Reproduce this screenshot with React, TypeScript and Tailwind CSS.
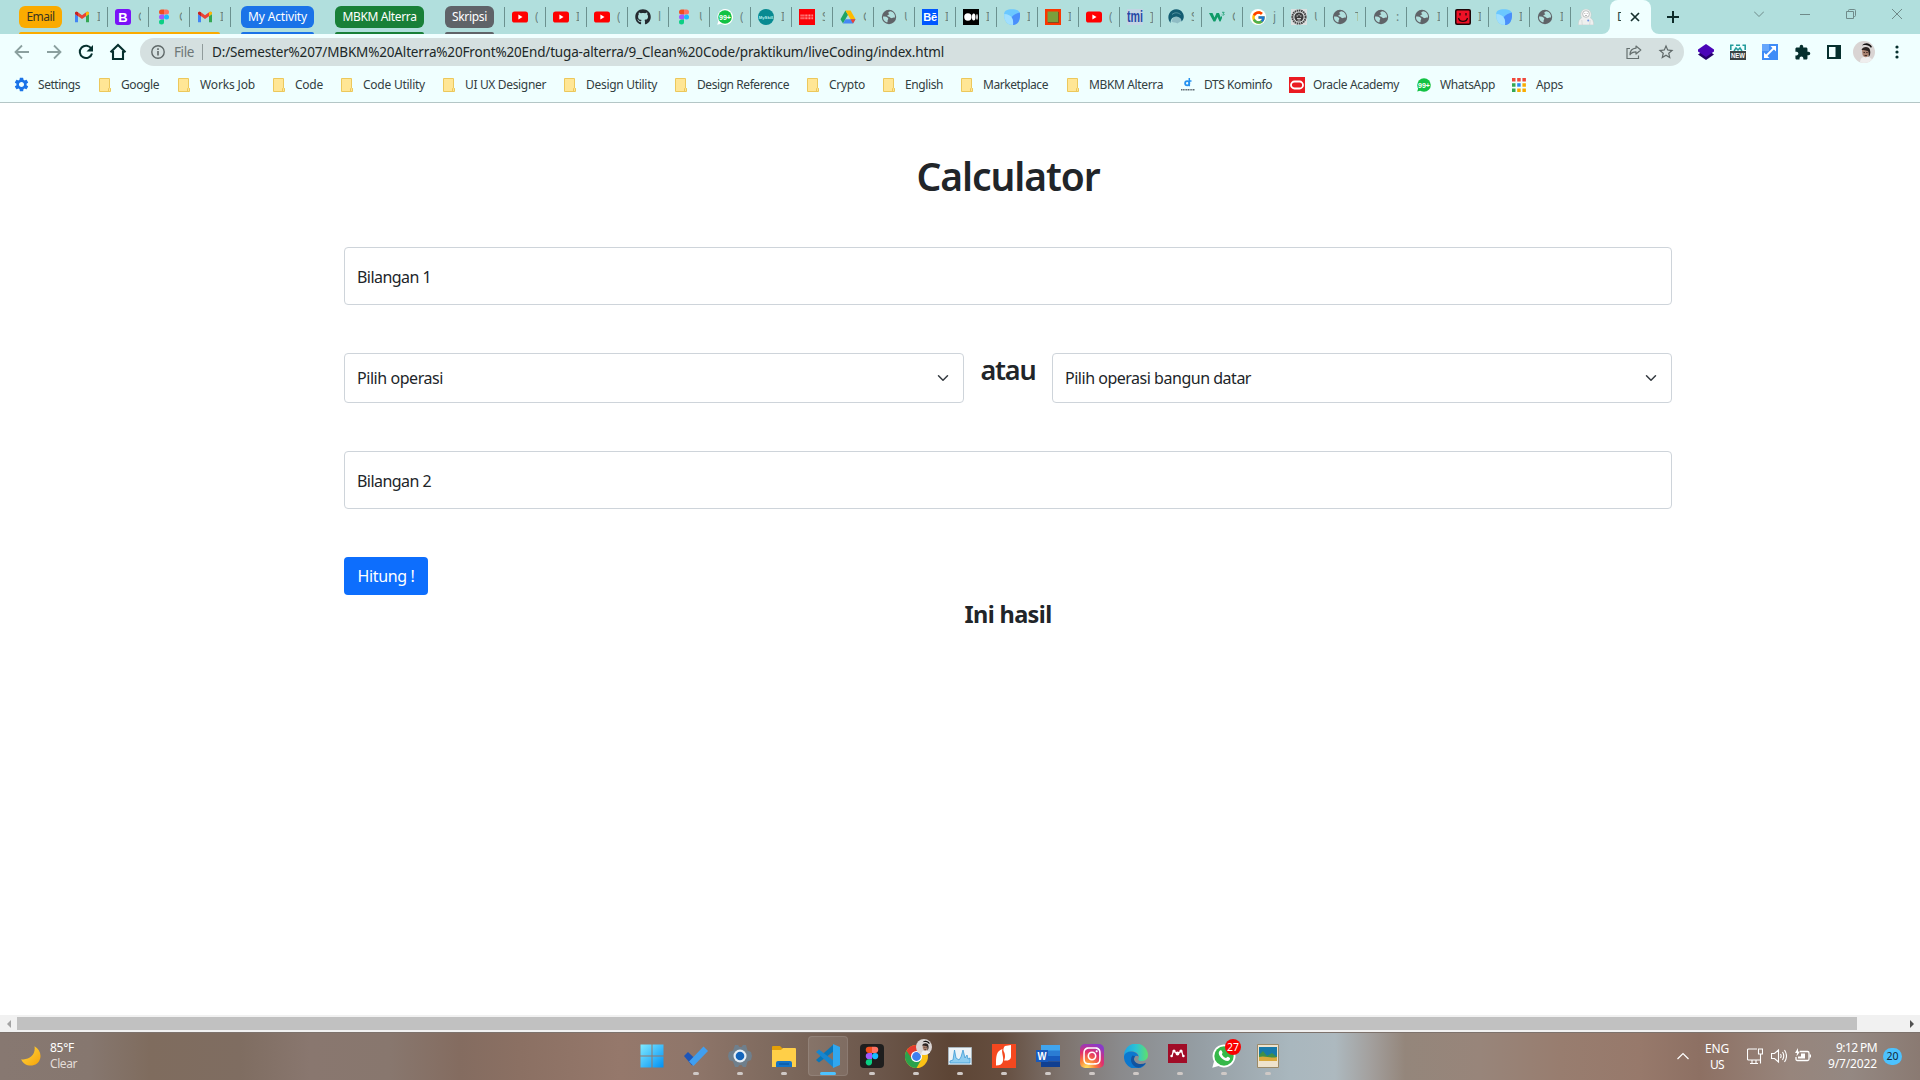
import React, { useLayoutEffect, useRef, useState } from "react";
import { FaGithub, FaInstagram } from "react-icons/fa";
import { FcGoogle } from "react-icons/fc";
import { MdExtension, MdSettings, MdStarOutline } from "react-icons/md";

/* Text whose letter spacing is tuned so the line fills a given width. */
function Fit({ w, children, className = "" }: { w: number; children: string; className?: string }) {
  const ref = useRef<HTMLSpanElement>(null);
  const [spacing, setSpacing] = useState(0);
  useLayoutEffect(() => {
    if (ref.current) {
      const natural = ref.current.getBoundingClientRect().width - spacing * children.length;
      setSpacing((w - natural) / children.length);
    }
  }, [w, children]);
  return (
    <span ref={ref} className={`inline-block whitespace-pre ${className}`} style={{ letterSpacing: spacing }}>
      {children}
    </span>
  );
}

type IconProps = { s?: number };

const Gmail = ({ s = 16 }: IconProps) => (
  <svg width={s} height={s} viewBox="0 0 16 16">
    <path d="M1 4v9.2h3V7.2L1 5z" fill="#4285f4" />
    <path d="M15 4v9.2h-3V7.2L15 5z" fill="#34a853" />
    <path d="M1 4.2C1 2.8 2.6 2.2 3.6 3L8 6.3v3.8L1 5.1z" fill="#ea4335" />
    <path d="M15 4.2c0-1.4-1.6-2-2.6-1.2L8 6.3v3.8L12 7.2z" fill="#ea4335" />
    <path d="M15 4.2c0-1.4-1.6-2-3-.9v4L15 5.1z" fill="#fbbc04" />
    <path d="M1 4.2C1 2.8 2.6 2.2 4 3.3v4L1 5.1z" fill="#c5221f" />
  </svg>
);

const Bootstrap = () => (
  <span className="flex size-4 items-center justify-center rounded-[3px] bg-[#7a12f8] font-['Liberation_Sans'] text-[13px] font-bold leading-none text-white">B</span>
);

const Figma = ({ s = 16 }: IconProps) => (
  <svg width={s} height={s} viewBox="0 0 16 16">
    <path d="M5.5 0.5H8v5H5.5a2.5 2.5 0 0 1 0-5z" fill="#f24e1e" />
    <path d="M8 .5h2.5a2.5 2.5 0 0 1 0 5H8z" fill="#ff7262" />
    <path d="M5.5 5.5H8v5H5.5a2.5 2.5 0 0 1 0-5z" fill="#a259ff" />
    <circle cx="10.5" cy="8" r="2.5" fill="#1abcfe" />
    <path d="M5.5 10.5H8V13a2.5 2.5 0 1 1-2.5-2.5z" fill="#0acf83" />
  </svg>
);

const YouTube = () => (
  <svg width="16" height="16" viewBox="0 0 16 16">
    <rect x="0" y="2.5" width="16" height="11" rx="2.6" fill="#f00" />
    <path d="M6.4 5.6v4.8L10.5 8z" fill="#fff" />
  </svg>
);

const GitHub = () => <FaGithub size={16} color="#24292f" />;

const Bubble99 = ({ ring = true }: { ring?: boolean }) => (
  <svg width="16" height="16" viewBox="0 0 16 16">
    <path d={ring ? "M8 .1a7.9 7.9 0 1 1-3.900 14.700L.2 15.800l1.200-3.900A7.900 7.900 0 0 1 8 .1z" : "M3 9l-1.800 5.500L7 13z"} fill={ring ? "#fff" : "#12c243"} />
    <circle cx="8" cy="8" r="6.8" fill="#12c243" />
    <text x="8" y="10.9" textAnchor="middle" textLength="12" lengthAdjust="spacingAndGlyphs" fontSize="8" fontWeight="700" fontFamily="Liberation Sans, sans-serif" fill="#fff">99+</text>
  </svg>
);

const MySkill = () => (
  <svg width="16" height="16" viewBox="0 0 16 16">
    <circle cx="8" cy="8" r="8" fill="#078a91" />
    <text x="8" y="9.6" textAnchor="middle" fontSize="4.2" fontWeight="700" fontFamily="Liberation Sans, sans-serif" fill="#bff1ee">MySkill</text>
  </svg>
);

const RedBox = () => (
  <svg width="16" height="16" viewBox="0 0 16 16">
    <path fill="#fb0006" d="M0 0h16v16H0z" />
    <path d="M1.500 6.500h13M1.500 9.300h13" stroke="#ff8f8f" strokeWidth="2" strokeDasharray="1.2 .5 .7 .4" />
  </svg>
);

const Drive = () => (
  <svg width="16" height="16" viewBox="0 0 16 16">
    <path d="M5.4 1.5L.5 10.2 3 14.5l5-8.7z" fill="#1fa463" />
    <path d="M5.4 1.5h5.2l4.9 8.7h-5z" fill="#ffba00" />
    <path d="M3 14.5l2.5-4.3h10L13 14.5z" fill="#4688f4" />
    <path d="M10.5 10.2h5L13 14.5z" fill="#ea4335" />
  </svg>
);

const Globe = () => (
  <svg width="16" height="16" viewBox="0 0 16 16">
    <circle cx="8" cy="8" r="7.2" fill="#5f6368" />
    <path d="M9.500 2.300C7 3 6.800 4.200 8 4.800c.8.500-.2 1.200-1.200 1.200-.8.300-.3 1.400.4 1.600 1.800 0 1.500 1.300 3 1.500 1 .2 1.500-.5 3.800-.5A6 6 0 0 0 9.500 2.300zM2 7.400c2.500 0 4.500.4 5.200 1.800.5 1.200-1 1.500-.6 3.200.1.900-.6 1-1.200.8A6 6 0 0 1 2 7.400z" fill="#b1dfdd" />
  </svg>
);

const Behance = () => (
  <span className="flex size-4 items-center justify-center bg-[#0057ff] font-['Liberation_Sans'] text-[11px] font-bold leading-none tracking-[-0.3px] text-white">Bē</span>
);

const Medium = () => (
  <svg width="16" height="16" viewBox="0 0 16 16">
    <path d="M0 0h16v16H0z" fill="#000" />
    <circle cx="4.9" cy="8" r="3.7" fill="#fff" />
    <ellipse cx="10.7" cy="8" rx="1.8" ry="3.5" fill="#fff" />
    <ellipse cx="14" cy="8" rx=".8" ry="3.1" fill="#fff" />
  </svg>
);

const BlueBlob = () => (
  <svg width="16" height="16" viewBox="0 0 16 16">
    <path d="M2 1.500C5-.3 11-.3 14 1.500c2 1.500 2.400 4 1.800 7.500C15 13.500 12.500 16 9 16 4 16 1 13 .3 8-.2 5 0 3 2 1.500z" fill="#6bc8ff" />
    <path d="M15.800 3.500C13 4 9 6 7.500 8.500c1.500 2 1.800 4.500 1.500 7.500 3.500 0 6-2.500 6.800-7 .3-2 .3-4 0-5.500z" fill="#4a8ffb" />
    <path d="M.2 5C4 5 7 6.500 8.300 9.500c.9 2 1 4.500.7 6.500C4 16 1 13 .3 8z" fill="#a0dfff" />
  </svg>
);

const GreenBox = () => (
  <svg width="16" height="16" viewBox="0 0 16 16">
    <path d="M0 0h16v16H0z" fill="#fb3600" />
    <path d="M3 3h11v11H3z" fill="#8a4a1c" />
    <path d="M2.500 2.500h10.500v10.500H2.500z" fill="#7a9f3c" />
  </svg>
);

const Tmi = () => (
  <svg width="16" height="16" viewBox="0 0 16 16">
    <path d="M0 0h16v16H0z" fill="#c3d5e4" />
    <text x="0" y="13" textLength="16" lengthAdjust="spacingAndGlyphs" fontSize="16" fontWeight="700" fontFamily="Liberation Sans, sans-serif" fill="#2548a5">tmi</text>
  </svg>
);

const Sailor = () => (
  <svg width="16" height="16" viewBox="0 0 16 16">
    <path d="M2.500 14C-1 10 0 4 4 1.500 8-.8 13 .5 15 4.500c1.500 3 .8 6-1.500 8-1-3-3-4.500-6-4.500-3.500.3-5 2.500-5 6z" fill="#135c72" />
    <path d="M3.500 12.500C4.500 9 6 7.500 8.500 7.500c2.500.3 4.500 1.500 5 4-1 2-3 1.500-4 3-2-1.500-4-.5-6-2z" fill="#8fbcc4" />
    <path d="M4 5.500c3-2.500 6-2 8.500 0" stroke="#5795a3" fill="none" />
  </svg>
);

const W3 = () => (
  <svg width="16" height="16" viewBox="0 0 16 16">
    <path d="M0 4h3.500l2 4.500L7.500 4H10l1.800 4.500L13 6.500V9l-1.500 3.500h-1L8.500 8l-2.200 4.500H4.500z" fill="#0f9b68" />
    <path d="M13 3.300h2.200l-1 1.200c1.300.2 1.200 1.800-.2 1.700-.5 0-.8-.2-1-.5" fill="none" stroke="#0f9b68" strokeWidth=".8" />
  </svg>
);

const GoogleDisc = () => (
  <span className="flex size-4 items-center justify-center rounded-full bg-white">
    <FcGoogle size={15} />
  </span>
);

const Crest = () => (
  <svg width="16" height="16" viewBox="0 0 16 16">
    <path d="M0 0h16v16H0z" fill="#dce0e0" />
    <circle cx="8" cy="8" r="6.600" fill="none" stroke="#444" strokeWidth="2" strokeDasharray="1.600 .6" />
    <circle cx="8" cy="8" r="4.600" fill="#3c3c3c" />
    <path d="M5.500 7h1.500M9 7h1.500M6 9.500h4M8 5v1.500M6.500 11h3" stroke="#ccc" strokeWidth="1" />
  </svg>
);

const Smiley = () => (
  <svg width="16" height="16" viewBox="0 0 16 16">
    <rect width="16" height="16" rx="2" fill="#200508" />
    <rect x="1.500" y="1.500" width="13" height="13" rx="1" fill="#ee1126" />
    <path d="M5 4v2.500M11 4v2.500M3.500 9c1 4.500 8 4.500 9 0" stroke="#200508" strokeWidth="1.200" fill="none" />
  </svg>
);

const Astronaut = () => (
  <svg width="16" height="16" viewBox="0 0 16 16">
    <path d="M3.500 9C1.500 4 4 0 8 0s6.500 4 4.500 9c2.300.8 3.200 3.500 3.300 7H.2C.3 12.500 1.200 9.800 3.500 9z" fill="#eef0ef" stroke="#bcc6c5" strokeWidth=".5" />
    <rect x="4.700" y="1.800" width="6.600" height="6.400" rx="3" fill="#fff" stroke="#a9aead" strokeWidth=".8" />
    <path d="M6.300 4.500h1M8.700 4.500h1M7 6.500h2" stroke="#999" strokeWidth=".7" />
    <path d="M3.800 11l.5 5M12.200 11l-.5 5" stroke="#c9cfce" strokeWidth=".6" />
    <circle cx="10.200" cy="11.500" r="1" fill="#6c92e8" />
  </svg>
);

type TabDef = { icon: React.ReactNode; t: string };
const emailTabs: TabDef[] = [
  { icon: <Gmail />, t: "I" },
  { icon: <Bootstrap />, t: "C" },
  { icon: <Figma />, t: "C" },
  { icon: <Gmail />, t: "I" },
];
const tabs: TabDef[] = [
  { icon: <YouTube />, t: "(" },
  { icon: <YouTube />, t: "I" },
  { icon: <YouTube />, t: "(" },
  { icon: <GitHub />, t: "l" },
  { icon: <Figma />, t: "U" },
  { icon: <Bubble99 />, t: "(" },
  { icon: <MySkill />, t: "I" },
  { icon: <RedBox />, t: "S" },
  { icon: <Drive />, t: "C" },
  { icon: <Globe />, t: "U" },
  { icon: <Behance />, t: "I" },
  { icon: <Medium />, t: "I" },
  { icon: <BlueBlob />, t: "I" },
  { icon: <GreenBox />, t: "I" },
  { icon: <YouTube />, t: "(" },
  { icon: <Tmi />, t: "]" },
  { icon: <Sailor />, t: "S" },
  { icon: <W3 />, t: "C" },
  { icon: <GoogleDisc />, t: "j" },
  { icon: <Crest />, t: "U" },
  { icon: <Globe />, t: "T" },
  { icon: <Globe />, t: ":" },
  { icon: <Globe />, t: "I" },
  { icon: <Smiley />, t: "I" },
  { icon: <BlueBlob />, t: "I" },
  { icon: <Globe />, t: "I" },
];

const Tab = ({ icon, t }: TabDef) => (
  <div className="flex h-[34px] w-[41px] shrink-0 items-center pl-[7px]">
    <span className="flex size-4 shrink-0 items-center justify-center">{icon}</span>
    <span className="ml-[7px] w-[3px] overflow-hidden text-[12px] leading-4 text-[#3c4a48] opacity-60">{t}</span>
    <span className="ml-auto h-5 w-px bg-[#6b918f]" />
  </div>
);

const Pill = ({ label, w, tw, cls }: { label: string; w: string; tw: number; cls: string }) => (
  <div className={`flex h-[34px] shrink-0 flex-col justify-between pt-1.5 ${w}`}>
    <div className={`flex h-[22px] items-center justify-center rounded-[6px] text-[12px] leading-4 ${cls}`}>
      <Fit w={tw}>{label}</Fit>
    </div>
    <div className={`h-0.5 rounded-t-sm ${cls}`} />
  </div>
);

function TabStrip() {
  return (
    <div className="flex h-[34px] shrink-0 bg-[#b1dfdd] pl-[19px]">
      <div className="flex h-[34px] w-[212px] flex-col">
        <div className="flex h-8 shrink-0">
          <div className="mr-[5px] mt-1.5 flex h-[22px] w-[43px] shrink-0 items-center justify-center rounded-[6px] bg-[#faab00] text-[12px] leading-4 text-[#3a3520]">
            <Fit w={28}>Email</Fit>
          </div>
          {emailTabs.map((x, i) => <Tab key={i} {...x} />)}
        </div>
        <div className="h-0.5 w-[201px] rounded-t-sm bg-[#faab00]" />
      </div>
      <div className="ml-2.5 mr-2.5 flex gap-[21px]">
        <Pill label="My Activity" w="w-[73px]" tw={59} cls="bg-[#1a73e8] text-white" />
        <Pill label="MBKM Alterra" w="w-[89px]" tw={74} cls="bg-[#188038] text-white" />
        <Pill label="Skripsi" w="w-[49px]" tw={35} cls="bg-[#5f6368] text-white" />
      </div>
      <span className="mt-[7px] h-5 w-px bg-[#6b918f]" />
      {tabs.map((x, i) => <Tab key={i} {...x} />)}
      <div className="flex w-[31px] shrink-0 items-center pl-[7px]"><span className="block size-4 shrink-0"><Astronaut /></span></div>
      <svg width="8" height="34" viewBox="0 0 8 34" className="shrink-0"><path d="M0 34a8 8 0 0 0 8-8v8z" fill="#f0ffff" /></svg>
      <div className="flex h-[34px] w-[41px] shrink-0 items-center rounded-t-[8px] bg-[#f0ffff]">
        <span className="ml-[7px] w-1 overflow-hidden text-[12px] text-[#274543]">D</span>
        <svg className="ml-[9px]" width="10" height="10" viewBox="0 0 10 10"><path d="M1 1l8 8M9 1L1 9" stroke="#17302e" strokeWidth="1.700" /></svg>
      </div>
      <svg width="8" height="34" viewBox="0 0 8 34" className="shrink-0"><path d="M8 34a8 8 0 0 1-8-8v8z" fill="#f0ffff" /></svg>
      <div className="flex flex-1 items-center justify-between pl-2 pr-[18px]">
        <svg width="12" height="12" viewBox="0 0 12 12"><path d="M6 0v12M0 6h12" stroke="#0d2b29" strokeWidth="2" /></svg>
        <div className="mb-1.5 flex items-center gap-9 text-[#6f8a89]">
          <svg width="10" height="10" viewBox="0 0 10 10"><path d="M0 2.500l5 5 5-5" fill="none" stroke="currentColor" /></svg>
          <svg width="10" height="10" viewBox="0 0 10 10"><path d="M0 5.500h10" stroke="currentColor" /></svg>
          <svg width="10" height="10" viewBox="0 0 10 10"><path d="M.5 2.500h7v7h-7zM2.500 2.500V1.500q0-1 1-1h5q1 0 1 1v5q0 1-1 1h-1" fill="none" stroke="currentColor" /></svg>
          <svg width="10" height="10" viewBox="0 0 10 10"><path d="M0 0l10 10M10 0L0 10" stroke="currentColor" /></svg>
        </div>
      </div>
    </div>
  );
}

function Toolbar() {
  return (
    <div className="flex h-9 shrink-0 items-center bg-[#f0ffff] pl-[14px]">
      <div className="flex w-[126px] items-center gap-4">
        <svg width="16" height="16" viewBox="0 0 16 16"><path d="M15 8H2M8 1.500L1.500 8 8 14.500" fill="none" stroke="#8ba09f" strokeWidth="1.800" /></svg>
        <svg width="16" height="16" viewBox="0 0 16 16"><path d="M1 8h13M8 1.500L14.500 8 8 14.500" fill="none" stroke="#8ba09f" strokeWidth="1.800" /></svg>
        <svg width="16" height="16" viewBox="0 0 16 16"><path d="M13.400 4.800A6.200 6.200 0 1 0 14 9.500" fill="none" stroke="#06302e" strokeWidth="2" /><path d="M15 1v6.500H8.500z" fill="#06302e" /></svg>
        <svg width="18" height="18" viewBox="0 0 18 18" className="-ml-px"><path d="M1.500 9.200L9 2l7.500 7.200M4 8v8h10V8" fill="none" stroke="#06302e" strokeWidth="2.100" /></svg>
      </div>
      <div className="flex h-7 w-[1544px] items-center rounded-full bg-[#d5e0e0] pl-[11px] pr-[9px] text-[14px]">
        <svg width="14" height="14" viewBox="0 0 14 14"><circle cx="7" cy="7" r="6.200" fill="none" stroke="#5f6868" strokeWidth="1.400" /><path d="M7 6v4.500M7 3.300V5" stroke="#5f6868" strokeWidth="1.600" /></svg>
        <Fit w={20} className="ml-[9px] text-[13.500px] text-[#6d7777]">File</Fit>
        <span className="ml-2 h-4 w-px bg-[#909b9b]" />
        <Fit w={732} className="ml-[9px] text-[13.500px] text-[#202828]">D:/Semester%207/MBKM%20Alterra%20Front%20End/tuga-alterra/9_Clean%20Code/praktikum/liveCoding/index.html</Fit>
        <svg className="ml-auto" width="16" height="16" viewBox="0 0 16 16"><path d="M4 4.500H1v10h11.500v-3" fill="none" stroke="#66706f" strokeWidth="1.200" /><path d="M10 2l4.800 4L10 10V7.800C7 7.800 5 9 4 10.800 4 7 6.500 4.500 10 4.200z" fill="none" stroke="#66706f" strokeWidth="1.200" strokeLinejoin="round" /></svg>
        <MdStarOutline size={18} color="#5f6868" className="ml-[15px]" />
      </div>
      <div className="ml-3.5 flex items-center">
        <svg width="16" height="16" viewBox="0 0 16 16"><path d="M0 10.500L8 5l8 5.500L8 16z" fill="#25006c" /><path d="M0 5.500L8 0l8 5.500v2L8 13 0 7.500z" fill="#4a05b8" /></svg>
        <svg className="ml-4" width="16" height="16" viewBox="0 0 16 16"><path d="M.8 6V1.300h2.700M6 1.300h4M12.500 1.300h2.700V6" fill="none" stroke="#239c9c" strokeWidth="1.600" /><path d="M4 7l2-3L8 6l2-2 2 3" fill="none" stroke="#239c9c" strokeWidth="1.500" /><path d="M0 7h16v9H0z" fill="#3b4343" /><text x="1" y="14.200" textLength="14" lengthAdjust="spacingAndGlyphs" fontSize="8" fontWeight="700" fontFamily="Liberation Sans, sans-serif" fill="#fff">NEW</text></svg>
        <svg className="ml-4" width="16" height="16" viewBox="0 0 16 16"><path d="M0 0h16v16H0z" fill="#3f8cf7" /><path d="M0 0h7v7H0z" fill="#66a6fb" /><path d="M4 12l8-8" stroke="#fff" strokeWidth="1.800" /><path d="M8.500 2H14v5.500zM2 8.500V14h5.500z" fill="#fff" /></svg>
        <MdExtension size={17} color="#06302e" className="ml-4" />
        <svg className="ml-4" width="14" height="14" viewBox="0 0 14 14"><path d="M1 1h12v12H1z" fill="#f0ffff" stroke="#06302e" strokeWidth="2" /><path d="M8.500 1H13v12H8.500z" fill="#06302e" /></svg>
        <Avatar s={22} className="ml-3" />
        <svg className="ml-5" width="4" height="14" viewBox="0 0 4 14" fill="#06302e"><circle cx="2" cy="2" r="1.600" /><circle cx="2" cy="7" r="1.600" /><circle cx="2" cy="12" r="1.600" /></svg>
      </div>
    </div>
  );
}

const Avatar = ({ s, className = "" }: { s: number; className?: string }) => (
  <svg width={s} height={s} viewBox="0 0 22 22" className={className}>
    <defs><clipPath id="face"><circle cx="11" cy="11" r="11" /></clipPath></defs>
    <g clipPath="url(#face)">
      <path d="M0 0h22v22H0z" fill="#d9d4d3" />
      <path d="M7 22c0-4 2-6 4-6h5l6 4v2z" fill="#efeeee" />
      <path d="M9 9c1-2 7-2 7 0v4.500c-1 3.500-5.500 3.500-6.500 0z" fill="#a98270" />
      <path d="M8.500 9c1-4 8-4 8.500 0 .8 3 0 6-1.500 7 .6-3 .4-4.500-.5-6-2-.5-4-1-6.500-1z" fill="#2c2422" />
      <path d="M9 4.500c3-3.500 8-2.500 10 1.500l-1.200.8C16 4 13 3.500 9 4.500z" fill="#141212" />
      <path d="M10.500 11.500h1.500M13.200 11.500h1.500M11.500 14.500h2.500" stroke="#3a2520" strokeWidth=".9" />
    </g>
  </svg>
);

const Folder = () => (
  <svg width="12" height="14" viewBox="0 0 12 14"><path d="M.5.5h10v9.500l1 .5v3H.5z" fill="#ffe695" stroke="#ecc85c" /><path d="M9.500 13V10.500q1-1.500 2 0V13" fill="#ffe695" stroke="#ecc85c" /></svg>
);
const AppsGrid = () => (
  <svg width="14" height="14" viewBox="0 0 14 14">
    <path d="M0 0h3.500v3.500H0zM5.200 0h3.500v3.500H5.200zM10.400 0h3.500v3.500h-3.500z" fill="#f0483b" />
    <path d="M0 5.200h3.500v3.500H0zM0 10.400h3.500v3.500H0z" fill="#34a853" />
    <path d="M5.200 5.200h3.500v3.500H5.200z" fill="#2a8af0" />
    <path d="M10.400 5.200h3.500v3.500h-3.500zM5.200 10.400h3.500v3.500H5.200zM10.400 10.400h3.500v3.500h-3.500z" fill="#f9ab00" />
  </svg>
);
const Dts = () => (
  <svg width="16" height="16" viewBox="0 0 16 16"><circle cx="7.200" cy="6.200" r="2.100" fill="none" stroke="#2591f0" strokeWidth="1.800" /><path d="M9.300 1v8.200M8.500 4h3" stroke="#2591f0" strokeWidth="1.500" /><path d="M1 12.700h14" stroke="#5c6870" strokeWidth="1.500" strokeDasharray="1.200 .5" /></svg>
);
const Oracle = () => (
  <svg width="16" height="16" viewBox="0 0 16 16"><path d="M0 0h16v16H0z" fill="#ea1b22" /><rect x="2" y="4.500" width="12" height="7" rx="3.500" fill="none" stroke="#fff" strokeWidth="1.800" /></svg>
);

type Bm = { label: string; tw: number; cell: string; icon?: React.ReactNode };
const bookmarks: Bm[] = [
  { label: "Settings", tw: 42, cell: "w-[83px]", icon: <MdSettings size={17} color="#1a73e8" className="-ml-0.5" /> },
  { label: "Google", tw: 38, cell: "w-[79px]" },
  { label: "Works Job", tw: 55, cell: "w-[95px]" },
  { label: "Code", tw: 28, cell: "w-[68px]" },
  { label: "Code Utility", tw: 62, cell: "w-[102px]" },
  { label: "UI UX Designer", tw: 81, cell: "w-[121px]" },
  { label: "Design Utility", tw: 71, cell: "w-[111px]" },
  { label: "Design Reference", tw: 92, cell: "w-[132px]" },
  { label: "Crypto", tw: 36, cell: "w-[76px]" },
  { label: "English", tw: 38, cell: "w-[78px]" },
  { label: "Marketplace", tw: 65, cell: "w-[106px]" },
  { label: "MBKM Alterra", tw: 74, cell: "w-[115px]" },
  { label: "DTS Kominfo", tw: 68, cell: "w-[109px]", icon: <span className="-ml-px"><Dts /></span> },
  { label: "Oracle Academy", tw: 86, cell: "w-[127px]", icon: <span className="-ml-px"><Oracle /></span> },
  { label: "WhatsApp", tw: 55, cell: "w-[96px]", icon: <span className="-ml-px"><Bubble99 ring={false} /></span> },
  { label: "Apps", tw: 27, cell: "w-[60px]", icon: <span className="-ml-px"><AppsGrid /></span> },
];

function Bookmarks() {
  return (
    <div className="flex h-[33px] shrink-0 items-center border-b border-[#b4c6c6] bg-[#f0ffff] pb-[3px] pl-[15px] text-[12px] leading-4 text-[#33403f]">
      {bookmarks.map((b) => (
        <div key={b.label} className={`flex shrink-0 items-center ${b.cell}`}>
          <span className="flex w-[23px] shrink-0 items-center">{b.icon ?? <span className="ml-px"><Folder /></span>}</span>
          <Fit w={b.tw}>{b.label}</Fit>
        </div>
      ))}
    </div>
  );
}

const Chevron = () => (
  <svg width="16" height="12" viewBox="0 0 16 16"><path d="M2 5l6 6 6-6" fill="none" stroke="#343a40" strokeWidth="2" strokeLinecap="round" strokeLinejoin="round" /></svg>
);

function Page() {
  return (
    <main className="flex-1 overflow-hidden bg-white pl-[344px] text-[16px] leading-6 text-[#212529]">
      <div className="flex w-[1328px] flex-col">
        <h1 className="mt-[49px] text-center text-[39px] font-semibold leading-[48px]"><Fit w={183}>Calculator</Fit></h1>
        <div className="mt-[47px] flex h-[58px] items-center rounded border border-[#ced4da] px-3 pt-px"><Fit w={74}>Bilangan 1</Fit></div>
        <div className="mt-12 flex h-[50px]">
          <div className="flex w-[620px] items-center justify-between rounded border border-[#ced4da] px-3"><Fit w={86}>Pilih operasi</Fit><Chevron /></div>
          <div className="flex w-[88px] justify-center text-[27px] font-semibold leading-[34px]"><Fit w={55}>atau</Fit></div>
          <div className="flex w-[620px] items-center justify-between rounded border border-[#ced4da] px-3"><Fit w={186}>Pilih operasi bangun datar</Fit><Chevron /></div>
        </div>
        <div className="mt-12 flex h-[58px] items-center rounded border border-[#ced4da] px-3 pt-px"><Fit w={74}>Bilangan 2</Fit></div>
        <button className="mt-12 flex h-[38px] w-[84px] items-center justify-center rounded bg-[#0d6efd] text-white"><Fit w={57}>Hitung !</Fit></button>
        <h2 className="mt-1 text-center text-[23.500px] font-bold leading-[30px]"><Fit w={87}>Ini hasil</Fit></h2>
      </div>
    </main>
  );
}

function ScrollBar() {
  return (
    <div className="flex h-[17px] shrink-0 items-center bg-[#f1f1f1]">
      <div className="flex w-[17px] justify-center"><svg width="4" height="8" viewBox="0 0 4 8"><path d="M4 0v8L0 4z" fill="#a3a3a3" /></svg></div>
      <div className="h-[13px] w-[1840px] bg-[#c1c1c1]" />
      <div className="flex flex-1 justify-end pr-1.5"><svg width="4" height="8" viewBox="0 0 4 8"><path d="M0 0v8l4-4z" fill="#505050" /></svg></div>
    </div>
  );
}

const taskIcons: React.ReactNode[] = [
  <svg width="24" height="24" viewBox="0 0 24 24"><defs><linearGradient id="win" x1="0" y1="0" x2="1" y2="1"><stop offset="0" stopColor="#80eaff" /><stop offset="1" stopColor="#0090f4" /></linearGradient></defs><path d="M.5.5h11v11H.5zM12.500.5h11v11h-11zM.5 12.500h11v11H.5zM12.500 12.500h11v11h-11z" fill="url(#win)" /></svg>,
  <svg width="24" height="24" viewBox="0 0 24 24"><path d="M0 12l4-4 8.500 8-4.500 5.500z" fill="#1d55b8" /><path d="M5 17.500L19.500 2.500l4.500 4.500L9.500 22z" fill="#409ff0" /></svg>,
  <svg width="24" height="24" viewBox="0 0 24 24"><path d="M7 1h3l1.500 2h2L15 1h3l1.500 5.500L23 8l1 4-1 4-3.500 1.500L18 23h-3l-1.500-2h-2L10 23H7l-2-5.500L1 16l-1-4 1-4 4-1.500z" fill="#6f7f8c" /><circle cx="12" cy="12" r="6.500" fill="#e5eef5" /><circle cx="12" cy="12" r="4.300" fill="#1465bb" /></svg>,
  <svg width="24" height="24" viewBox="0 0 24 24"><path d="M0 3q0-1 1-1h7l2.500 2.500V9H0z" fill="#e3a008" /><path d="M0 6h9l2-2h12q1 0 1 1v18H0z" fill="#ffcf48" /><path d="M4 23v-4q0-2 2-2h12q2 0 2 2v4z" fill="#1473c6" /><path d="M7 20h10" stroke="#0c559b" strokeWidth="1.200" /></svg>,
  <svg width="24" height="24" viewBox="0 0 24 24"><path d="M18 0v7L3 18.500 0 16z" fill="#0876b9" /><path d="M0 8l3-2.500L18 17v7z" fill="#1786cf" /><path d="M17 0l7 3v18l-7 3z" fill="#30a7ef" /></svg>,
  <span className="flex size-6 items-center justify-center rounded-sm bg-[#1e1e1e]"><Figma s={20} /></span>,
  <span className="relative flex size-6 items-center justify-center">
    <svg width="23" height="23" viewBox="0 0 24 24"><circle cx="12" cy="12" r="12" fill="#fbc116" /><path d="M12 12L1.600 6A12 12 0 0 0 12 24l5-9z" fill="#2ba24c" /><path d="M1.600 6A12 12 0 0 1 22.400 6H12l-5 8z" fill="#e33b2e" /><circle cx="12" cy="12" r="5.800" fill="#fff" /><circle cx="12" cy="12" r="4.600" fill="#3f7fee" /></svg>
    <Avatar s={16} className="absolute -right-[4px] -top-[5px]" />
  </span>,
  <svg width="24" height="24" viewBox="0 0 24 24"><path d="M.5 3.500h23v17H.5z" fill="#edf3f7" stroke="#aab6bd" /><path d="M2 17l3-1 1.500-10L8 14l3 2 2-3 2-7 2 8 2-3 1 4 2-1v5H2z" fill="#8ecdf0" stroke="#3f9bd4" strokeWidth=".8" /></svg>,
  <svg width="24" height="24" viewBox="0 0 24 24"><path d="M0 0h24v24H0z" fill="#f4481f" /><path d="M13 2l6-1v12c-.5 3-3 4-7 3.500 2-4 .5-8-.5-9.500C11 4.500 12 3 13 2z" fill="#fff" /><path d="M10.500 5C9 8 12 13 11 17c-.5 3-3 4.500-7 4.500C4 13 4 7 10.500 5z" fill="#fff" /></svg>,
  <svg width="24" height="24" viewBox="0 0 24 24"><path d="M5 1h19v6H5z" fill="#41a5ee" /><path d="M5 6.500h19V12H5z" fill="#2b7cd3" /><path d="M5 12h19v5.500H5z" fill="#185abd" /><path d="M5 17.500h19V23H5z" fill="#103f91" /><path d="M0 6h12v12H0z" fill="#185abd" /><text x="1.500" y="15.500" textLength="9" lengthAdjust="spacingAndGlyphs" fontSize="10" fontWeight="700" fontFamily="Liberation Sans, sans-serif" fill="#fff">W</text></svg>,
  <span className="flex size-6 items-center justify-center rounded-[5px] bg-[radial-gradient(circle_at_28%_100%,#ffd75a_5%,#fa7d3a_30%,#e1306c_55%,#8a3ac8_85%)]"><FaInstagram size={20} color="#fff" /></span>,
  <svg width="24" height="24" viewBox="0 0 24 24"><defs><linearGradient id="edge"><stop offset="0" stopColor="#1ba2e4" /><stop offset=".5" stopColor="#2cc3d4" /><stop offset="1" stopColor="#5fe06b" /></linearGradient></defs><path d="M0 12A12 12 0 0 1 24 11c0 4-3 6-6.500 6-3 0-4-1.500-2.500-3.500C15 9 11 7 7 7.500 3 8 1 10 0 12z" fill="url(#edge)" /><path d="M0 12c1-3.500 4.500-5 8-4.500 4 .5 6.500 3 6.500 5-2-2-5 0-4.500 3.500.6 4 6 6 12 3.500A12 12 0 0 1 0 12z" fill="#0c78cf" /><path d="M8.500 11.500C5 16 8 23 14.500 23.800c3-.8 6-2.600 7.500-5.100-5.500 2.800-11.500.8-12-3.200 0-1.500.3-2.500 1-3.300z" fill="#13539f" /></svg>,
  <span className="mb-[5px] mr-[5px] block"><svg width="19" height="19" viewBox="0 0 19 19"><path d="M0 0h19v19H0z" fill="#a10c27" /><path d="M3.200 12.500C5 12 3.800 9 5.800 7L9.500 10l3.700-3c2 2 .8 5 2.600 5.500" fill="none" stroke="#fff" strokeWidth="1.300" /><circle cx="3.600" cy="12" r="1.300" fill="#fff" /><circle cx="15.400" cy="12" r="1.300" fill="#fff" /><circle cx="6" cy="7" r="1.600" fill="#fff" /><circle cx="13" cy="7" r="1.600" fill="#fff" /><circle cx="9.500" cy="9.500" r="1.900" fill="#fff" /></svg></span>,
  <span className="relative flex size-6 items-center justify-center">
    <svg width="24" height="24" viewBox="0 0 24 24"><path d="M12 .5a11.500 11.500 0 1 1-5.500 21.600L.3 23.700 2 17.600A11.500 11.500 0 0 1 12 .5z" fill="#fff" /><circle cx="12" cy="12" r="9.700" fill="#36b84a" /><path d="M8 6.500c1.500-1 2 .5 2.500 2 .3 1-1 1.300-.5 2 1 2 2 3 4 3.500.7 0 1.200-1.500 2-1.200l2 1.200c.5 1-1 3-2.500 3C11 17 6 11 6.800 8.500c.2-1 .7-1.600 1.200-2z" fill="#fff" /></svg>
    <span className="absolute -right-[5px] -top-[5px] flex size-4 items-center justify-center rounded-full bg-[#f90000] text-[10.500px] leading-none text-white">27</span>
  </span>,
  <svg width="24" height="24" viewBox="0 0 24 24"><path d="M1.500.5h21v23h-21z" fill="#eee3cd" stroke="#9b8a69" /><path d="M3 3h18v14H3z" fill="#1779a9" /><path d="M3 11l4-4 4 5 5-3 5 4v4H3z" fill="#3f8f49" /><path d="M3 13c6-2 12 2 18 0v4H3z" fill="#d8a93d" /></svg>,
];

function Taskbar() {
  return (
    <footer className="flex h-12 shrink-0 items-center border-t border-[#7d726c] bg-[linear-gradient(90deg,#877871_0px,#86776f_90px,#7f6c5e_150px,#7f6d61_240px,#89776f_310px,#88776e_390px,#846c60_460px,#8b7063_520px,#95786b_620px,#8f766a_690px,#7d695d_780px,#6b564a_880px,#5d4535_950px,#644d3e_1000px,#7d726c_1060px,#8a8a8c_1120px,#959ea4_1200px,#a9b7be_1290px,#adb9bf_1335px,#a3a09e_1370px,#94867b_1405px,#98857a_1480px,#987d6f_1560px,#97796b_1640px,#8d7063_1700px,#97857c_1790px,#948882_1850px,#8a7a72_1920px)] pb-px text-white">
      <div className="flex w-[630px] shrink-0 items-center pl-[21px]">
        <svg width="20" height="20" viewBox="0 0 20 20"><defs><linearGradient id="moon" x1="0" y1="0" x2="1" y2="1"><stop offset="0" stopColor="#ffd943" /><stop offset="1" stopColor="#f7a308" /></linearGradient></defs><path d="M13.500.3C20.500 4 21.500 13 16 17.500 10.500 21.500 2.500 19.500.2 13.200 8 14.500 15 9 13.500.3z" fill="url(#moon)" /></svg>
        <div className="ml-[9px] flex flex-col items-start text-[12px] leading-4"><Fit w={24}>85°F</Fit><Fit w={27} className="text-[#e3dcd8]">Clear</Fit></div>
      </div>
      {taskIcons.map((icon, i) => (
        <div key={i} className="flex h-[46px] w-11 shrink-0 items-center justify-center">
          <div className={`relative flex size-10 items-center justify-center rounded ${i === 4 ? "bg-white/10 ring-1 ring-inset ring-white/10" : ""}`}>
            {icon}
            {i > 0 && <span className={`absolute bottom-px h-[3px] rounded-full ${i === 4 ? "w-4 bg-[#4cc2ff]" : "w-1.5 bg-[#cfc9c6]"}`} />}
          </div>
        </div>
      ))}
      <div className="ml-auto flex items-center pr-[18px] text-[12px] leading-4">
        <svg width="12" height="12" viewBox="0 0 12 12"><path d="M.5 9L6 3.500 11.500 9" fill="none" stroke="#fff" strokeWidth="1.200" /></svg>
        <div className="ml-4 flex w-6 flex-col items-center pt-px"><Fit w={24}>ENG</Fit><Fit w={14}>US</Fit></div>
        <svg className="ml-[18px]" width="16" height="16" viewBox="0 0 16 16"><path d="M10 1H1.500Q.5 1 .5 2v9q0 1 1 1H13.500V7M5 12v3.500M9 12v3.500M3 15.500h8M11.500 1h4v5h-4zM13.500 6v9.500" fill="none" stroke="#fff" strokeWidth="1.100" /></svg>
        <svg className="ml-2" width="16" height="16" viewBox="0 0 16 16"><path d="M.5 5.500h3L7.500 2v12l-4-3.500h-3zM9.500 6q1.300 2 0 4M11.500 4q2.500 4 0 8M13.500 2q4 6 0 12" fill="none" stroke="#fff" strokeWidth="1.100" /></svg>
        <svg className="ml-2" width="16" height="16" viewBox="0 0 16 16"><path d="M5 3.500h7.500q1.500 0 1.500 1.500v6q0 1.500-1.500 1.500H2.500Q1 12.500 1 11V9M15.500 6.500v3" fill="none" stroke="#fff" strokeWidth="1.300" /><path d="M6 5.500h4v5H3V8.500h3zM3 0L0 5h2L1.500 8.500 5 3.500H3z" fill="#fff" /></svg>
        <div className="ml-[18px] flex w-12 flex-col items-end"><Fit w={41}>9:12 PM</Fit><Fit w={49}>9/7/2022</Fit></div>
        <span className="ml-1.5 flex h-[17px] w-[19px] items-center justify-center rounded-full bg-[#4cc2ff] text-[10.500px] leading-none text-[#10293a]">20</span>
      </div>
    </footer>
  );
}

export default function App() {
  return (
    <div className="flex h-[1080px] w-[1920px] flex-col overflow-hidden bg-white font-['Noto_Sans','Open_Sans',sans-serif]">
      <TabStrip />
      <Toolbar />
      <Bookmarks />
      <Page />
      <ScrollBar />
      <Taskbar />
    </div>
  );
}
